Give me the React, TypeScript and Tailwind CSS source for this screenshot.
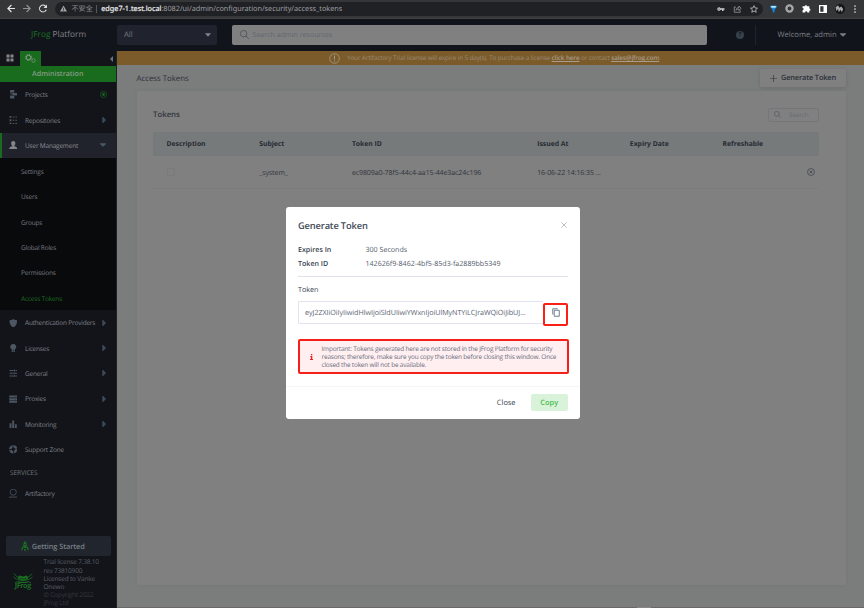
import React from 'react';

type IconProps = { className?: string; children: React.ReactNode; box?: string };

function Glyph({ className = '', children, box = '0 0 16 16' }: IconProps) {
  return (
    <svg viewBox={box} className={`shrink-0 ${className}`} fill="currentColor">
      {children}
    </svg>
  );
}

const stroke = { fill: 'none', stroke: 'currentColor' } as const;

const icons: Record<string, React.ReactNode> = {
  projects: <path d="M2 0h8v4.500H2zM6 5.700h9v4.600H6zM2 11.500h8V16H2zM3 4h1.500v8H3z" />,
  repositories: <path d="M1 0h3.500v3.500H1zM1 6.200h3.500v3.500H1zM1 12.500h3.500V16H1zM7 .8h3v2H7zM12 .8h3v2h-3zM7 7h3v2H7zM12 7h3v2h-3zM7 13.200h3v2H7zM12 13.200h3v2h-3z" />,
  user: <path d="M8 0c2.400 0 4 1.700 4 4s-1 4.500-2.500 5.300c.3 1 6 .8 6 5.700H.5c0-4.900 5.700-4.700 6-5.700C5 8.500 4 6.300 4 4s1.600-4 4-4z" />,
  shield: <path d="M8 0l2 1.400 5 .8c.5 6-1.500 11-7 13.800C2.500 13.200.5 8.200 1 2.200l5-.8z" />,
  license: <path d="M8 0a5.400 5.400 0 0 1 3 10v6l-3-2-3 2v-6A5.400 5.400 0 0 1 8 0zM7 11v2l1-.6 1 .6v-2z" fillRule="evenodd" />,
  general: <path d="M1 2h8v1.800H1zM12 2h3v1.800h-3zM9.500 1h1.600v4H9.500zM1 7.200h3v1.800H1zM7 7.200h8v1.800H7zM4.600 6h1.600v4H4.600zM1 12.400h8v1.800H1zM12 12.400h3v1.800h-3zM9.500 11h1.600v4H9.500z" />,
  proxies: <path d="M.5 1h15v3.800H.5zM.5 6h15v3.800H.5zM.5 11h15v3.800H.5zM11 2.400v1h1v-1zM11 7.400v1h1v-1zM11 12.400v1h1v-1z" fillRule="evenodd" />,
  monitoring: <path d="M1 6h3.600v9H1zM6 1h3.600v14H6zM11 8h3.600v7H11z" />,
  support: (
    <>
      <circle cx="8" cy="8" r="5.400" {...stroke} strokeWidth="4.200" strokeDasharray="6.400 2.080" />
      <circle cx="8" cy="8" r="7.300" {...stroke} strokeWidth="1" />
    </>
  ),
  artifactory: (
    <>
      <circle cx="8" cy="6" r="5.800" {...stroke} strokeWidth="1.500" />
      <path d="M-.5 14.400h17v1.600h-17z" />
    </>
  ),
};

function NavRow({ icon, label, mark }: { icon: string; label: string; mark?: 'right' | 'down' | 'dot' }) {
  const active = mark === 'down';
  return (
    <div
      className={`flex h-[25.350px] shrink-0 items-center border-l-2 pl-[6.500px] pr-[9.500px] text-[6.500px] tracking-[-0.200px] ${
        active ? 'border-[#196b1f] bg-[#20232c] text-[#8c8f94]' : 'border-transparent text-[#80838a]'
      }`}
    >
      <Glyph className={`h-[8.500px] w-[8.500px] ${active ? 'text-[#858688]' : 'text-[#4d5661]'}`}>{icons[icon]}</Glyph>
      <span className="ml-[8px] whitespace-nowrap pt-px">{label}</span>
      <span className="flex-1" />
      {mark === 'right' && (
        <Glyph className="h-[6px] w-[4px] text-[#3d4c5a]" box="0 0 4 6"><path d="M.3 0h.8L4 3 1.100 6H.3z" /></Glyph>
      )}
      {mark === 'down' && (
        <Glyph className="h-[4px] w-[6px] text-[#4a5a68]" box="0 0 6 4"><path d="M0 .3h6v.8L3 3.800 0 1.100z" /></Glyph>
      )}
      {mark === 'dot' && (
        <Glyph className="mr-[-1px] h-[7px] w-[7px] text-[#17651c]">
          <circle cx="8" cy="8" r="7" {...stroke} strokeWidth="1.600" />
          <circle cx="8" cy="8" r="3.200" />
        </Glyph>
      )}
    </div>
  );
}

function BrowserBar() {
  return (
    <header className="flex h-[19px] shrink-0 items-center border-b border-[#3f4241] bg-[#353637] pb-px pl-[6px] text-[#e4e5e7]">
      <Glyph className="h-[9px] w-[10px]"><path d="M15 7v2H5l4.500 4.500L8 15 1 8l7-7 1.500 1.500L5 7z" /></Glyph>
      <Glyph className="ml-[6px] h-[9px] w-[10px] text-[#909193]"><path d="M1 7v2h10l-4.500 4.500L8 15l7-7-7-7-1.500 1.500L11 7z" /></Glyph>
      <Glyph className="ml-[6px] h-[9px] w-[10px]"><path d="M13 3A7 7 0 1 0 14.700 10h-2.200A5 5 0 1 1 11.500 4.500L9 7h6V1z" /></Glyph>
      <div className="ml-[6.500px] flex h-[14px] w-[708px] items-center rounded-full bg-[#202124] pl-[5.500px] pr-[5px] font-['Noto_Sans','Noto_Sans_CJK_SC',sans-serif]">
        <Glyph className="h-[7px] w-[7px] text-[#a0a2a5]"><path d="M8 1l8 14H0zM7.200 6v4h1.600V6zm0 5v2h1.600v-2z" fillRule="evenodd" /></Glyph>
        <span className="ml-[4.500px] pt-[1.500px] text-[7.100px] text-[#8d9094]">不安全</span>
        <span className="ml-[3px] h-[8px] w-px bg-[#55575a]" />
        <span className="ml-[4.500px] whitespace-nowrap pt-[1.500px] text-[7.260px] text-[#9b9ea2]">
          <span className="text-[#eceded] [-webkit-text-stroke:0.200px_#eceded]">edge7-1.test.local</span>:8082/ui/admin/configuration/security/access_tokens
        </span>
        <span className="flex-1" />
        <Glyph className="h-[8px] w-[8px] text-[#c9cbcd]"><path d="M4 4.500a3.500 3.500 0 1 0 3.200 5H10V12h3V9.500h2v-3H7.200A3.500 3.500 0 0 0 4 4.500zM4 6.800a1.200 1.200 0 1 1 0 2.400 1.200 1.200 0 0 1 0-2.400z" fillRule="evenodd" /></Glyph>
        <Glyph className="ml-[8px] h-[8px] w-[9px] text-[#9a9ca0]"><path d="M5 4H1.500v10.500h12V11M5 10.500c.5-4 3-5.500 6-5.500V2l4 4.500L11 11V8c-3 0-4.500.5-6 2.500z" {...stroke} strokeWidth="1.500" /></Glyph>
        <Glyph className="ml-[8px] h-[8px] w-[8px] text-[#c9cbcd]"><path d="M8 1.200l2 4.700 5 .4-3.800 3.300 1.200 5L8 12l-4.400 2.600 1.200-5L1 6.300l5-.4z" {...stroke} strokeWidth="1.500" /></Glyph>
      </div>
      <Glyph className="ml-[7px] h-[8px] w-[7px]"><path d="M0 3l3-3h10l3 3-5 6-1 7H7L5 9z" fill="#1684dc" /><path d="M1 3l3-2h8l3 2-3 2H4z" fill="#b9e4fa" /></Glyph>
      <Glyph className="ml-[8.500px] h-[9px] w-[9px] text-[#a8a9aa]"><circle cx="8" cy="8" r="5.500" {...stroke} strokeWidth="4" /></Glyph>
      <Glyph className="ml-[7.500px] h-[9px] w-[9px] text-white"><path d="M1 4h4a2 2 0 1 1 4 0h4v4a2 2 0 1 1 0 4v3H9.500a2 2 0 0 0-4 0H1v-4a2 2 0 0 0 0-4z" /></Glyph>
      <Glyph className="ml-[8px] h-[8px] w-[8px] text-white"><path d="M0 0h16v16H0zM2.500 2.500v11H9v-11z" fillRule="evenodd" /></Glyph>
      <Glyph className="ml-[8px] h-[10px] w-[10px]">
        <circle cx="8" cy="8" r="8" fill="#151515" />
        <path d="M1 5l4-3 2 4 3-2 3 4-2 5-2-4-3 4-1-5-3 3z" fill="#aaa" />
      </Glyph>
      <Glyph className="ml-[6px] h-[8px] w-[8px] text-[#dddddd]"><circle cx="8" cy="2" r="1.700" /><circle cx="8" cy="8" r="1.700" /><circle cx="8" cy="14" r="1.700" /></Glyph>
    </header>
  );
}

function TopBar() {
  return (
    <div className="flex h-[32px] shrink-0 items-center bg-[#12141b] pb-px">
      <div className="w-[116.500px] pl-[31px] pt-px text-[8.300px] text-[#83858a]">
        <span className="text-[#1a7021]">JFrog</span> Platform
      </div>
      <div className="flex h-[20px] w-[100px] items-center justify-between rounded-[2px] bg-[#20232d] pl-[7.500px] pr-[6px] text-[7.700px] text-[#76797f]">
        <span className="pt-[2.500px]">All</span>
        <Glyph className="h-[4px] w-[6px] text-[#84868a]" box="0 0 6 4"><path d="M0 .3h6L3 3.800z" /></Glyph>
      </div>
      <div className="ml-[15.500px] flex h-[20px] w-[475px] items-center rounded-[2px] bg-[#808080] pl-[8px] text-[7.100px] text-[#62676f]">
        <Glyph className="h-[9px] w-[9px] text-[#454b55]"><circle cx="6.500" cy="6.500" r="5.700" {...stroke} strokeWidth="1.300" /><path d="M10.500 10.500l5 5" {...stroke} strokeWidth="1.400" /></Glyph>
        <span className="ml-[3.500px] pt-[2px]">Search admin resources</span>
      </div>
      <div className="ml-[29px] flex h-[8px] w-[8px] items-center justify-center rounded-full bg-[#36404c] text-[6px] font-bold text-[#12141b]">?</div>
      <div className="ml-[11px] h-[20px] w-px bg-[#20232b]" />
      <span className="ml-[21.500px] whitespace-nowrap pt-[1.500px] text-[7.600px] text-[#7c8087]">Welcome, admin</span>
      <Glyph className="ml-[3px] mt-px h-[4px] w-[6px] text-[#777b82]" box="0 0 6 4"><path d="M0 .2h6v.8L3 3.800 0 1z" /></Glyph>
    </div>
  );
}

function FrogMark() {
  return (
    <Glyph className="h-[11px] w-[20px]" box="0 0 40 22">
      <g {...stroke} strokeWidth="1.800">
        <path d="M2 1c4 6 8 8 12 8M38 1c-4 6-8 8-12 8M1 8c4 4 8 5 11 5M39 8c-4 4-8 5-11 5" />
        <path d="M4 20c7-4 10-5 16-5s9 1 16 5" />
      </g>
      <path d="M10 11c0-4 2-6 4-6s2 2 6 2 4-2 6-2 4 2 4 6c-3 4-17 4-20 0z" />
      <path d="M8 19c8-2 16-2 24 0-8 1.500-16 1.500-24 0z" />
      <path d="M14 10.500c4 2 8 2 12 0" fill="none" stroke="#12141a" strokeWidth="1" />
    </Glyph>
  );
}

function Sidebar() {
  return (
    <nav className="flex w-[116.500px] shrink-0 flex-col border-r border-[#202126] bg-[#12141a]">
      <div className="flex h-[15px] shrink-0 items-end pl-[6px]">
        <Glyph className="mb-[4px] h-[8px] w-[8px] text-[#85878a]"><path d="M1 1h6v6H1zM9 1h6v6H9zM1 9h6v6H1zM9 9h6v6H9z" /></Glyph>
        <div className="ml-[6px] flex h-[15px] w-[21px] items-center justify-center bg-[#196b1e]">
          <Glyph className="h-[9px] w-[11px] text-[#899a8b]" box="0 0 22 18">
            <circle cx="7" cy="7" r="4.500" {...stroke} strokeWidth="2" />
            <circle cx="7" cy="7" r="6" {...stroke} strokeWidth="2" strokeDasharray="2.350 2.350" />
            <circle cx="17" cy="13" r="3.500" {...stroke} strokeWidth="1.400" />
          </Glyph>
        </div>
        <span className="flex-1" />
        <Glyph className="mb-[4.500px] mr-[3px] h-[6px] w-[3px] text-[#667484]" box="0 0 3 6"><path d="M3 0v6L0 3z" /></Glyph>
      </div>
      <div className="flex h-[16px] shrink-0 items-center justify-center bg-[#196b1e] text-[7.100px] font-semibold text-[#879d88]">Administration</div>
      <NavRow icon="projects" label="Projects" mark="dot" />
      <NavRow icon="repositories" label="Repositories" mark="right" />
      <NavRow icon="user" label="User Management" mark="down" />
      <div className="shrink-0 bg-[#090a0c] text-[6.500px] tracking-[-0.190px] text-[#7a7d84]">
        {['Settings', 'Users', 'Groups', 'Global Roles', 'Permissions', 'Access Tokens'].map((t) => (
          <div key={t} className={`flex h-[25.350px] items-center pl-[21px] pt-[2.200px] ${t === 'Access Tokens' ? 'text-[#1a6b20]' : ''}`}>{t}</div>
        ))}
      </div>
      <NavRow icon="shield" label="Authentication Providers" mark="right" />
      <NavRow icon="license" label="Licenses" mark="right" />
      <NavRow icon="general" label="General" mark="right" />
      <NavRow icon="proxies" label="Proxies" mark="right" />
      <NavRow icon="monitoring" label="Monitoring" mark="right" />
      <NavRow icon="support" label="Support Zone" />
      <div className="flex h-[18.700px] shrink-0 items-center pl-[10px] pt-[2px] text-[6.500px] tracking-[-0.100px] text-[#70747b]">SERVICES</div>
      <NavRow icon="artifactory" label="Artifactory" />
      <div className="mx-[6px] mr-[5px] mt-[30.300px] flex h-[20px] shrink-0 items-center justify-center rounded-[2px] bg-[#20252e] pr-[11px] text-[7.400px] font-semibold tracking-[-0.100px] text-[#7b7f85]">
        <Glyph className="mr-[3px] h-[11px] w-[8px] text-[#1a7021]" box="0 0 16 22">
          <path d="M8 0c4 4 4 9 3 14H5C4 9 4 4 8 0zM8 6a1.500 1.500 0 1 0 0 3 1.500 1.500 0 0 0 0-3zM4 10v6l-3 4v-6zM12 10v6l3 4v-6zM6 16h4l-2 6z" fillRule="evenodd" />
        </Glyph>
        <span className="pt-[2.500px]">Getting Started</span>
      </div>
      <div className="mt-[2px] flex">
        <div className="flex w-[43.500px] shrink-0 flex-col items-center pl-[2px] pt-[14.500px] text-[#1b6b22]">
          <FrogMark />
          <span className="-mt-[1.500px] text-[7.300px] font-bold leading-[8px] tracking-[-0.450px]">JFrog</span>
        </div>
        <div className="whitespace-nowrap text-[6.500px] leading-[8.100px] tracking-[-0.190px] text-[#5a5e66]">
          <div>Trial license 7.38.10</div>
          <div>rev 73810900</div>
          <div>Licensed to Vanke</div>
          <div>Onewo</div>
          <div className="text-[#363940]">© Copyright 2022</div>
          <div className="text-[#363940]">JFrog Ltd</div>
        </div>
      </div>
    </nav>
  );
}

function TokensPage() {
  const cols = 'grid grid-cols-[92.700px_92.700px_185.300px_92.700px_92.700px_1fr] items-center pl-[13.500px]';
  return (
    <main className="flex min-w-0 flex-1 flex-col bg-[#7b7c7c]">
      <div className="flex h-[14px] shrink-0 items-center bg-[#7a5b29] pl-[212.500px] text-[6.350px] tracking-[-0.125px] text-[#9a8c78]">
        <Glyph className="mr-[7px] h-[11px] w-[11px] text-[#a09583]">
          <circle cx="8" cy="8" r="7" {...stroke} strokeWidth="1.300" />
          <path d="M7.200 3.500h1.600v6H7.200zM7.200 11h1.600v1.600H7.200z" />
        </Glyph>
        <span className="whitespace-nowrap">
          Your Artifactory Trial license will expire in 5 day(s). To purchase a license <b className="font-semibold text-[#a89c8a] underline">click here</b> or contact <b className="font-semibold text-[#a89c8a] underline">sales@jfrog.com</b>.
        </span>
      </div>
      <div className="flex h-[26px] shrink-0 items-center justify-between pl-[20px] pr-[18px] text-[#2b3038]">
        <span className="pt-[3px] text-[7.800px]">Access Tokens</span>
        <div className="flex h-[18px] w-[86px] items-center justify-center rounded-[2px] bg-[#808080] text-[7.350px] font-semibold tracking-[-0.120px] shadow-[0_1px_4px_#00000020]">
          <Glyph className="mr-[4px] h-[7px] w-[7px]"><path d="M7.300 0h1.400v7.300H16v1.400H8.700V16H7.300V8.700H0V7.300h7.300z" /></Glyph>
          <span className="pt-px">Generate Token</span>
        </div>
      </div>
      <section className="ml-[20px] mr-[18px] h-[494px] shrink-0 rounded-[2px] bg-[#808080] pl-[16.500px] pr-[27px] pt-[16px] shadow-[0_0_5px_#0000000c]">
        <div className="flex h-[15px] items-center justify-between">
          <span className="pt-[2px] text-[7.800px] font-semibold text-[#31363e]">Tokens</span>
          <div className="flex h-[14px] w-[51px] items-center rounded-[2px] border border-[#747679] pl-[5px] text-[6.200px] text-[#666c75]">
            <Glyph className="mr-[8px] h-[7px] w-[7px] text-[#50565f]"><circle cx="6.500" cy="6.500" r="5.600" {...stroke} strokeWidth="1.500" /><path d="M10.500 10.500l5 5" {...stroke} strokeWidth="1.500" /></Glyph>
            Search
          </div>
        </div>
        <div className={`${cols} mt-[9.500px] h-[24.500px] rounded-t-[2px] bg-[#777a7b] text-[6.800px] font-bold text-[#252a32]`}>
          <span>Description</span><span>Subject</span><span>Token ID</span><span>Issued At</span><span>Expiry Date</span><span>Refreshable</span>
        </div>
        <div className={`${cols} h-[32.500px] border-b border-[#7c7c7c] text-[7px] tracking-[-0.080px] text-[#30353d]`}>
          <span className="h-[8px] w-[8px] rounded-[1px] border border-[#787a7c]" />
          <span className="pt-[4.500px]">_system_</span>
          <span className="pt-[4.500px]">ec9809a0-78f5-44c4-aa15-44e3ac24c196</span>
          <span className="whitespace-nowrap pt-[4.500px]">16-06-22 14:16:35 ...</span>
          <span />
          <Glyph className="mr-[4px] h-[8px] w-[8px] justify-self-end text-[#3a3f47]"><circle cx="8" cy="8" r="7" {...stroke} strokeWidth="1.300" /><path d="M5 5l6 6M11 5l-6 6" {...stroke} strokeWidth="1.500" /></Glyph>
        </div>
      </section>
      <span className="flex-1" />
      <div className="flex h-px shrink-0 bg-[#6b6769]"><span className="ml-[520.500px] w-[14px] bg-[#8a8788]" /></div>
    </main>
  );
}

function TokenDialog() {
  return (
    <div className="absolute left-[286px] top-[207px] flex h-[212px] w-[294px] flex-col rounded-[3px] bg-white text-[#383f4e]">
      <div className="flex h-[36px] items-center justify-between pl-[12px] pr-[13px] pt-[2px]">
        <h1 className="text-[9.300px] font-semibold tracking-[-0.150px] text-[#414857]">Generate Token</h1>
        <Glyph className="mb-[3px] h-[6px] w-[6px] text-[#8e949e]"><path d="M1 1l14 14M15 1L1 15" {...stroke} strokeWidth="1.600" /></Glyph>
      </div>
      <div className="mx-[12px] grid h-[34px] shrink-0 grid-cols-[67.500px_1fr] content-start border-b border-[#dfe2ec] pt-px text-[7.100px] leading-[13.500px]">
        <span className="font-[560]">Expires In</span><span className="text-[#545c6a]">300 Seconds</span>
        <span className="font-[560]">Token ID</span><span className="text-[#545c6a]">142626f9-8462-4bf5-85d3-fa2889bb5349</span>
      </div>
      <div className="mx-[12px] flex h-[24px] shrink-0 items-center pt-[3px] text-[7.200px] font-medium">Token</div>
      <div className="mx-[12px] flex h-[25px] shrink-0">
        <div className="flex h-[23px] flex-1 items-center whitespace-nowrap rounded-l-[2px] border border-r-0 border-[#e1e4ee] pl-[6px] pt-[1.500px] text-[7.200px] tracking-[-0.055px] text-[#5c6472]">
          eyJ2ZXIiOiIyIiwidHlwIjoiSldUIiwiYWxnIjoiUlMyNTYiLCJraWQiOiJibUJ...
        </div>
        <div className="mt-[1.500px] flex h-[23px] w-[25px] shrink-0 items-center justify-center rounded-[2px] border-2 border-[#fb1f15] pb-[3px] text-[#6c7787]">
          <Glyph className="h-[9px] w-[8px]" box="0 0 16 18"><path d="M1.500 13V1.500h10M4.500 4.500h10v12h-10z" {...stroke} strokeWidth="1.900" /></Glyph>
        </div>
      </div>
      <div className="-mr-px ml-[12px] mt-[13px] flex h-[35px] w-[271px] shrink-0 items-center rounded-[2px] border-2 border-[#f52119] bg-[#ffeff1] text-[6.450px] leading-[8.100px] tracking-[-0.185px] text-[#686e7c]">
        <Glyph className="ml-[9.500px] h-[6px] w-[3px] text-[#ea2025]" box="0 0 3 6"><path d="M.9 0h1.400v1.200H.9zM.3 2h2v3H3v1H0V5h.9V3H.3z" /></Glyph>
        <div className="ml-[9px] whitespace-nowrap pt-px">
          <div>Important: Tokens generated here are not stored in the JFrog Platform for security</div>
          <div>reasons; therefore, make sure you copy the token before closing this window. Once</div>
          <div>closed the token will not be available.</div>
        </div>
      </div>
      <div className="mt-[11.500px] flex flex-1 items-center justify-end border-t border-[#f4f5f7] pr-[12px] text-[7.400px] font-medium">
        <span className="mr-[15px] pt-px">Close</span>
        <div className="flex h-[17px] w-[37.500px] items-center justify-center rounded-[2px] bg-[#d9f3da] pt-px font-semibold text-[#48bd4e]">Copy</div>
      </div>
    </div>
  );
}

export default function App() {
  return (
    <div className="relative flex h-[608px] w-[864px] flex-col overflow-hidden bg-[#12141b] font-['Open_Sans','Noto_Sans',sans-serif] [text-rendering:geometricPrecision]">
      <BrowserBar />
      <TopBar />
      <div className="flex min-h-0 flex-1">
        <Sidebar />
        <TokensPage />
      </div>
      <TokenDialog />
    </div>
  );
}
